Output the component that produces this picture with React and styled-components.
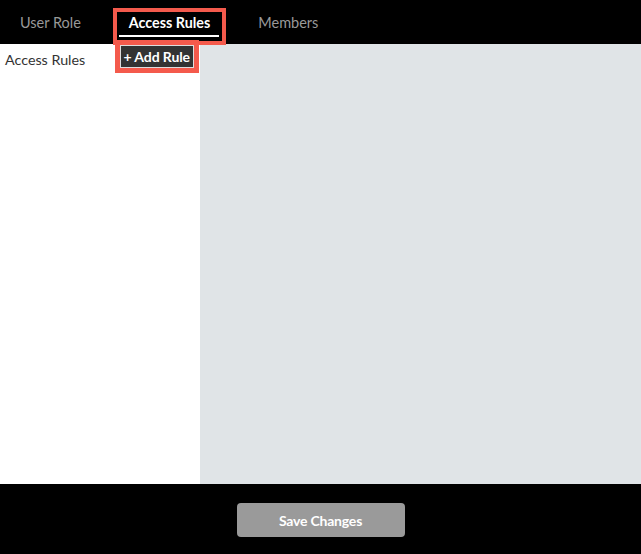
import React from "react";
import styled, { createGlobalStyle } from "styled-components";

const GlobalStyle = createGlobalStyle`
  html, body {
    margin: 0;
    padding: 0;
    height: 100%;
  }
  body {
    font-family: Lato, "Open Sans", sans-serif;
    background: #000;
  }
  #root {
    height: 100%;
  }
`;

const Page = styled.div`
  display: flex;
  flex-direction: column;
  height: 554px;
  background: #000;
`;

const TabBar = styled.div`
  display: flex;
  align-items: flex-start;
  gap: 24px;
  height: 44px;
  padding: 12px 0 0 8px;
  box-sizing: border-box;
  background: #000;
`;

const Tab = styled.div`
  position: relative;
  height: 29px;
  padding: 0 12px;
  box-sizing: border-box;
  font-size: ${(props) => (props.active ? "14.3px" : "14.5px")};
  line-height: 22px;
  font-weight: ${(props) => (props.active ? 700 : 400)};
  color: ${(props) => (props.active ? "#fff" : "#999")};
  outline: ${(props) => (props.active ? "4px solid #f45a4c" : "none")};
  cursor: pointer;

  &::after {
    content: "";
    display: ${(props) => (props.active ? "block" : "none")};
    position: absolute;
    left: 2px;
    right: 3px;
    top: 23px;
    height: 2px;
    background: #fff;
  }
`;

const Main = styled.div`
  display: flex;
  flex: 1;
`;

const Sidebar = styled.div`
  display: flex;
  justify-content: space-between;
  align-items: flex-start;
  width: 200px;
  padding: 1px 6px 0 5px;
  box-sizing: border-box;
  background: #fff;
`;

const SidebarTitle = styled.span`
  margin-top: 6px;
  font-size: 14.3px;
  line-height: 18px;
  color: #333;
`;

const AddButton = styled.button`
  height: 23px;
  padding: 0 3px;
  border: 1px solid #ddd;
  background: #333;
  color: #fff;
  font-family: Lato, "Open Sans", sans-serif;
  font-size: 14px;
  font-weight: 700;
  letter-spacing: -0.1px;
  line-height: 20px;
  outline: 5px solid #f45a4c;
  cursor: pointer;
`;

const Content = styled.div`
  flex: 1;
  background: #e0e4e7;
`;

const Footer = styled.div`
  display: flex;
  justify-content: center;
  height: 70px;
  padding-top: 19px;
  box-sizing: border-box;
  background: #000;
`;

const SaveButton = styled.button`
  width: 168px;
  height: 34px;
  border: none;
  border-radius: 4px;
  background: #9a9a9a;
  color: #fff;
  font-family: Lato, "Open Sans", sans-serif;
  font-size: 14px;
  font-weight: 700;
  letter-spacing: -0.2px;
  cursor: pointer;
`;

const App = () => {
  const tabs = ["User Role", "Access Rules", "Members"];

  return (
    <Page>
      <GlobalStyle />
      <TabBar>
        {tabs.map((t) => (
          <Tab key={t} active={t === "Access Rules"}>
            {t}
          </Tab>
        ))}
      </TabBar>
      <Main>
        <Sidebar>
          <SidebarTitle>Access Rules</SidebarTitle>
          <AddButton>+ Add Rule</AddButton>
        </Sidebar>
        <Content />
      </Main>
      <Footer>
        <SaveButton>Save Changes</SaveButton>
      </Footer>
    </Page>
  );
};

export default App;
